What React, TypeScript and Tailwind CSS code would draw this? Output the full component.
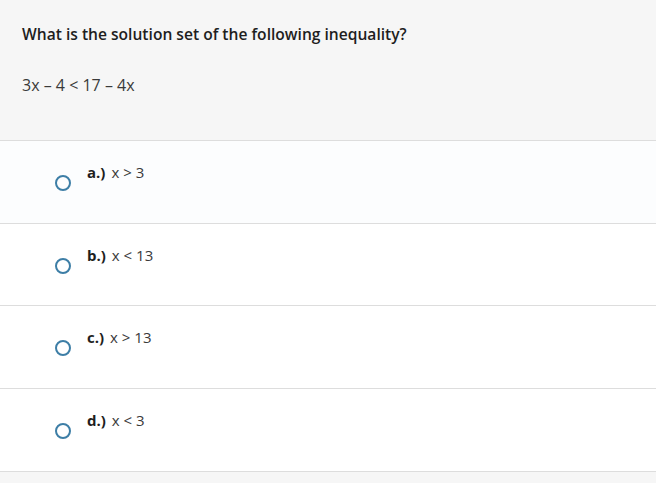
import React from "react";

const options = [
  { label: "a.)", value: "x > 3", bg: "bg-[#fcfdfe]", h: "h-[83px]" },
  { label: "b.)", value: "x < 13", bg: "bg-white", h: "h-[82px]" },
  { label: "c.)", value: "x > 13", bg: "bg-white", h: "h-[83px]" },
  { label: "d.)", value: "x < 3", bg: "bg-white", h: "h-[83px]" },
];

export default function App() {
  return (
    <div className="w-[656px] h-[483px] bg-[#f6f6f6] text-[#222] overflow-hidden" style={{ fontFamily: "'Open Sans', sans-serif" }}>
      <div className="h-[140px] px-[22px] pt-[24px]">
        <div className="text-[15.6px] font-semibold leading-[20px] text-[#1e1e1e]">What is the solution set of the following inequality?</div>
        <div className="mt-[31px] text-[16px] leading-[20px] text-[#3a3a3a]">3x – 4 &lt; 17 – 4x</div>
      </div>
      <div className="border-t border-[#dddddd]">
        {options.map((o, i) => (
          <div key={i} className={`${o.h} border-b border-[#dddddd] ${o.bg} flex`}>
            <div className="w-[87px] flex">
              <div className="ml-[55px] mt-[34px] w-[16px] h-[16px] rounded-full border-2 border-[#3d7ea6]" />
            </div>
            <div className="pt-[21px] text-[15px] leading-[20px] text-[#3a3a3a]">
              <span className="font-bold text-[#1e1e1e] mr-[6px]">{o.label}</span>{o.value}
            </div>
          </div>
        ))}
      </div>
    </div>
  );
}
